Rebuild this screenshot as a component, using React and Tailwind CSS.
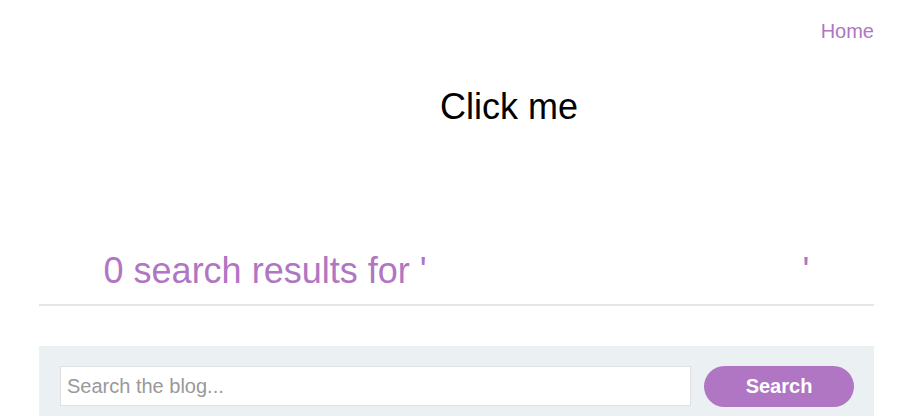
export default function App() {
  return (
    <div className="min-h-screen bg-white font-['Liberation_Sans',Arial,sans-serif]">
      <div className="ml-[39px] w-[835px]">
        <div className="flex justify-end pt-[20px]">
          <a href="#" className="text-[20px] leading-[23px] text-[#b075c3]">
            Home
          </a>
        </div>

        <div className="mt-[43px] pl-[401px] text-[36px] leading-[41px] text-black">
          Click me
        </div>

        <h1 className="mt-[123px] text-center text-[36px] leading-[41px] font-normal text-[#b075c3]">
          0 search results for '<span className="inline-block w-[376px]"></span>'
        </h1>

        <div className="mt-[13px] h-[2px] bg-[#e6e6e6]" />

        <div className="mt-[40px] flex gap-[13px] bg-[#ebf0f2] pt-[20px] pb-[20px] pl-[21px] pr-[20px]">
          <input
            type="text"
            placeholder="Search the blog..."
            className="h-[40px] flex-1 border border-[#e0e0e0] bg-white px-[6px] text-[20px] text-[#333] placeholder:text-[#999] outline-none"
          />
          <button className="h-[41px] w-[150px] rounded-full bg-[#b075c3] pb-[1px] text-[20px] font-bold text-white">
            Search
          </button>
        </div>
      </div>
    </div>
  )
}
